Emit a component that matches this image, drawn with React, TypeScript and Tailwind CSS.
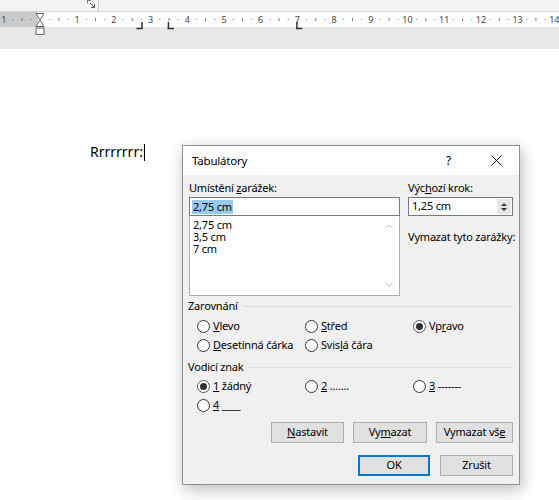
import React from 'react';

const CM = 36.7;
const ZERO = 40.5;

function Ruler() {
  const ticks: React.ReactNode[] = [];
  for (let n = -1; n <= 14; n++) {
    const x = ZERO + n * CM;
    if (n !== 0) {
      ticks.push(
        <text key={`n${n}`} x={x} y={11} textAnchor="middle" fontSize="9" fill="#444" fontFamily="'Noto Sans', sans-serif">
          {Math.abs(n)}
        </text>
      );
    }
    [0.25, 0.5, 0.75].forEach((q) => {
      const tx = x + q * CM;
      if (tx > 559) return;
      if (q === 0.5) {
        ticks.push(<rect key={`h${n}${q}`} x={tx - 0.5} y={6} width={1} height={3} fill="#777" />);
      } else {
        ticks.push(<rect key={`q${n}${q}`} x={tx - 0.5} y={7} width={1} height={1} fill="#777" />);
      }
    });
  }
  const rightTab = ZERO + 2.75 * CM;
  const leftTabs = [3.5, 7].map((c) => ZERO + c * CM);
  return (
    <div className="relative h-[15px] bg-white">
      <svg className="absolute left-0 top-0 overflow-visible" width="559" height="24" viewBox="0 0 559 24">
        <rect x="0" y="0" width="38" height="15" fill="#c9c9c9" />
        {ticks}
        <path d={`M${rightTab - 5} 16.5 H${rightTab + 1.5} M${rightTab + 0.5} 10 V17`} stroke="#333" strokeWidth="1.5" fill="none" />
        {leftTabs.map((x) => (
          <path key={x} d={`M${x - 1.5} 16.5 H${x + 5} M${x - 0.5} 10 V17`} stroke="#333" strokeWidth="1.5" fill="none" />
        ))}
        <path d="M36 1.5 H44 L40 8 Z M40 8 L36 14.5 H44 Z" fill="#fff" stroke="#666" strokeWidth="1" />
        <rect x="36" y="16" width="8" height="6.5" fill="#fff" stroke="#666" strokeWidth="1" />
      </svg>
    </div>
  );
}

function Radio({ checked = false, children }: { checked?: boolean; children: React.ReactNode }) {
  return (
    <div className="flex items-center gap-[3px] whitespace-nowrap">
      <span
        className={`flex h-[13px] w-[13px] items-center justify-center rounded-full border bg-white ${
          checked ? 'border-[#555]' : 'border-[#333]'
        }`}
      >
        {checked && <span className="h-[7px] w-[7px] rounded-full bg-[#333]" />}
      </span>
      <span>{children}</span>
    </div>
  );
}

function K({ children }: { children: React.ReactNode }) {
  return <span className="underline underline-offset-[1px]">{children}</span>;
}

function Btn({ children, w, primary = false }: { children: React.ReactNode; w: string; primary?: boolean }) {
  return (
    <div
      className={`flex h-[21px] items-center justify-center bg-[#e1e1e1] ${w} ${
        primary ? 'border-2 border-[#0078d7]' : 'border border-[#adadad]'
      }`}
    >
      {children}
    </div>
  );
}

function GroupLabel({ children }: { children: React.ReactNode }) {
  return (
    <div className="flex h-[14px] items-center gap-[5px] leading-[14px]">
      <span className="-ml-[1px]">{children}</span>
      <div className="h-px flex-1 bg-[#dcdcdc]" />
    </div>
  );
}

function Dialog() {
  return (
    <div
      className="absolute left-[182px] top-[145px] flex h-[340px] w-[338px] flex-col border border-[#8f8f8f] bg-[#f0f0f0] text-[11px] tracking-[-0.2px] text-black shadow-[2px_4px_14px_rgba(0,0,0,0.28)]"
      style={{ fontFamily: "'Noto Sans', sans-serif" }}
    >
      <div className="flex h-[29px] items-center bg-white pl-[9px]">
        <span className="text-[11.5px]">Tabulátory</span>
        <span className="ml-auto mr-[40px] text-[12px]">?</span>
        <svg width="11" height="11" viewBox="0 0 11 11" className="mr-[17px]">
          <path d="M0.5 0.5 L10.5 10.5 M10.5 0.5 L0.5 10.5" stroke="#111" strokeWidth="1" />
        </svg>
      </div>
      <div className="flex flex-col px-[6px]">
        <div className="flex gap-[8px]">
          <div className="flex w-[211px] flex-col">
            <div className="mt-[5px] h-[15px] leading-[15px]">
              Umístění <K>z</K>arážek:
            </div>
            <div className="mt-[2px] flex h-[19px] items-center border border-[#7a7a7a] bg-white pl-[2px]">
              <span className="bg-[#99c9ef] px-[1px] leading-[14px]">2,75 cm</span>
            </div>
            <div className="relative flex h-[80px] flex-col border border-t-0 border-[#acacac] bg-white pl-[3px] pt-[3px] leading-[12px]">
              <span className="h-[12px]">2,75 cm</span>
              <span className="h-[12px]">3,5 cm</span>
              <span className="h-[12px]">7 cm</span>
              <svg className="absolute right-[6px] top-[8px]" width="8" height="5" viewBox="0 0 8 5">
                <path d="M0.5 4.5 L4 1 L7.5 4.5" stroke="#bdbdbd" fill="none" />
              </svg>
              <svg className="absolute bottom-[8px] right-[6px]" width="8" height="5" viewBox="0 0 8 5">
                <path d="M0.5 0.5 L4 4 L7.5 0.5" stroke="#bdbdbd" fill="none" />
              </svg>
            </div>
          </div>
          <div className="flex w-[105px] flex-col">
            <div className="mt-[5px] h-[15px] whitespace-nowrap leading-[15px]">
              Výc<K>h</K>ozí krok:
            </div>
            <div className="mt-[2px] flex h-[19px] items-center border border-[#7a7a7a] bg-white pl-[3px]">
              <span className="flex-1">1,25 cm</span>
              <div className="mr-[1px] flex h-[15px] w-[14px] flex-col items-center justify-center gap-[2px] bg-[#e6e6e6]">
                <svg width="6" height="3" viewBox="0 0 6 3">
                  <path d="M0 3 L3 0 L6 3 Z" fill="#333" />
                </svg>
                <svg width="6" height="3" viewBox="0 0 6 3">
                  <path d="M0 0 L6 0 L3 3 Z" fill="#333" />
                </svg>
              </div>
            </div>
            <div className="mt-[13px] whitespace-nowrap leading-[15px]">Vymazat tyto zarážky:</div>
          </div>
        </div>

        <div className="mt-[3px]">
          <GroupLabel>Zarovnání</GroupLabel>
        </div>
        <div className="mt-[4px] grid grid-cols-[108px_108px_1fr] pl-[8px]">
          <div className="flex h-[19px] items-center">
            <Radio>
              <K>V</K>levo
            </Radio>
          </div>
          <div className="flex h-[19px] items-center">
            <Radio>
              <K>S</K>třed
            </Radio>
          </div>
          <div className="flex h-[19px] items-center">
            <Radio checked>
              Vp<K>r</K>avo
            </Radio>
          </div>
          <div className="flex h-[19px] items-center">
            <Radio>
              <K>D</K>esetinná čárka
            </Radio>
          </div>
          <div className="flex h-[19px] items-center">
            <Radio>
              Svis<K>l</K>á čára
            </Radio>
          </div>
          <div />
        </div>

        <div className="mt-[5px]">
          <GroupLabel>Vodicí znak</GroupLabel>
        </div>
        <div className="mt-[3px] grid grid-cols-[108px_108px_1fr] pl-[8px]">
          <div className="flex h-[19px] items-center">
            <Radio checked>
              <K>1</K> žádný
            </Radio>
          </div>
          <div className="flex h-[19px] items-center">
            <Radio>
              <K>2</K> .......
            </Radio>
          </div>
          <div className="flex h-[19px] items-center">
            <Radio>
              <K>3</K> -------
            </Radio>
          </div>
          <div className="flex h-[19px] items-center">
            <Radio>
              <K>4</K> ____
            </Radio>
          </div>
        </div>

        <div className="mt-[7px] flex justify-end gap-[9px]">
          <Btn w="w-[73px]">
            <K>N</K>astavit
          </Btn>
          <Btn w="w-[74px]">
            Vy<K>m</K>azat
          </Btn>
          <Btn w="w-[77px]">
            Vymazat vš<K>e</K>
          </Btn>
        </div>
        <div className="mt-[12px] flex justify-end gap-[10px]">
          <Btn w="w-[72px]" primary>
            OK
          </Btn>
          <Btn w="w-[73px]">Zrušit</Btn>
        </div>
      </div>
    </div>
  );
}

export default function App() {
  return (
    <div className="relative h-[500px] w-[559px] overflow-hidden bg-white">
      <div className="relative h-[12px] border-b border-[#d6d6d6] bg-[#f2f2f2]">
        <svg className="absolute left-[87px] top-0" width="9" height="9" viewBox="0 0 9 9">
          <path d="M0.5 0 V3.5 M0.5 0.5 H4" stroke="#777" fill="none" />
          <path d="M3 3 L7.5 7.5 M4 7.5 H7.5 V4" stroke="#555" fill="none" />
        </svg>
        <div className="absolute left-[98px] top-0 h-[11px] w-px bg-[#c8c8c8]" />
      </div>
      <Ruler />
      <div className="h-[22px] bg-[#e8e8e8]" />
      <div className="pl-[90px] pt-[94px]">
        <div className="flex items-center">
          <span className="text-[14px] leading-[18px] text-black" style={{ fontFamily: "'Noto Sans', sans-serif" }}>
            Rrrrrrrr:
          </span>
          <span className="ml-[1px] h-[17px] w-px bg-black" />
        </div>
      </div>
      <Dialog />
    </div>
  );
}
